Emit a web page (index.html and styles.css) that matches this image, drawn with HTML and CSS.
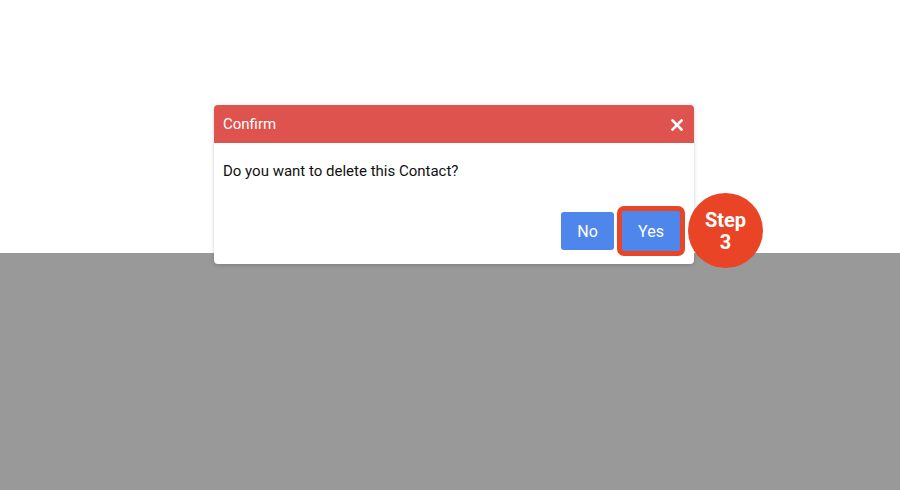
FILE: index.html
```html
<!DOCTYPE html>
<html>
<head>
<meta charset="utf-8">
<link rel="stylesheet" href="styles.css">
</head>
<body>
<div class="page">
  <div class="top"></div>
  <div class="bottom"></div>
</div>
<div class="dialog">
  <div class="dialog-header">
    <span class="title">Confirm</span>
    <svg class="close" width="12" height="12" viewBox="0 0 12 12"><path d="M1.5 1.5 L10.5 10.5 M10.5 1.5 L1.5 10.5" stroke="#fff" stroke-width="2.6" stroke-linecap="square"/></svg>
  </div>
  <div class="dialog-body">Do you want to delete this Contact?</div>
  <div class="dialog-footer">
    <button class="btn">No</button>
    <span class="highlight"><button class="btn">Yes</button></span>
  </div>
</div>
<div class="step">Step<br>3</div>
</body>
</html>
```
FILE: styles.css
```css
html, body { margin: 0; padding: 0; }
body { font-family: Roboto, "Liberation Sans", sans-serif; width: 900px; height: 490px; overflow: hidden; position: relative; }
.page { display: flex; flex-direction: column; height: 490px; }
.top { height: 253px; background: #ffffff; }
.bottom { flex: 1; background: #999999; }
.dialog { position: absolute; left: 214px; top: 105px; width: 480px; height: 159px; background: #fff; border-radius: 4px; box-shadow: 0 1px 4px rgba(0,0,0,0.18); display: flex; flex-direction: column; }
.dialog-header { height: 38px; background: #df534f; border-radius: 4px 4px 0 0; display: flex; align-items: center; justify-content: space-between; padding: 0 11px 0 9px; color: #fff; }
.title { font-size: 15px; }
.close { display: block; margin-top: 1px; }
.dialog-body { padding: 18px 9px 0; font-size: 15px; line-height: 20px; color: #111; }
.dialog-footer { display: flex; justify-content: flex-end; align-items: center; padding: 25px 13px 0 0; }
.btn { width: 53px; height: 38px; background: #4f86ec; color: #fff; border: none; border-radius: 3px; font-family: Roboto, "Liberation Sans", sans-serif; font-size: 16px; padding: 0; }
.highlight { display: flex; margin-left: 3px; border: 5px solid #ea4427; border-radius: 7px; padding: 1px; margin-right: -4px; background: #4f86ec; }
.highlight .btn { width: 56px; height: 38px; }
.step { position: absolute; left: 688px; top: 193px; width: 75px; height: 75px; border-radius: 50%; background: #ea4427; color: #fff; font-weight: bold; font-size: 20px; line-height: 22px; display: flex; align-items: center; justify-content: center; text-align: center; }
```
